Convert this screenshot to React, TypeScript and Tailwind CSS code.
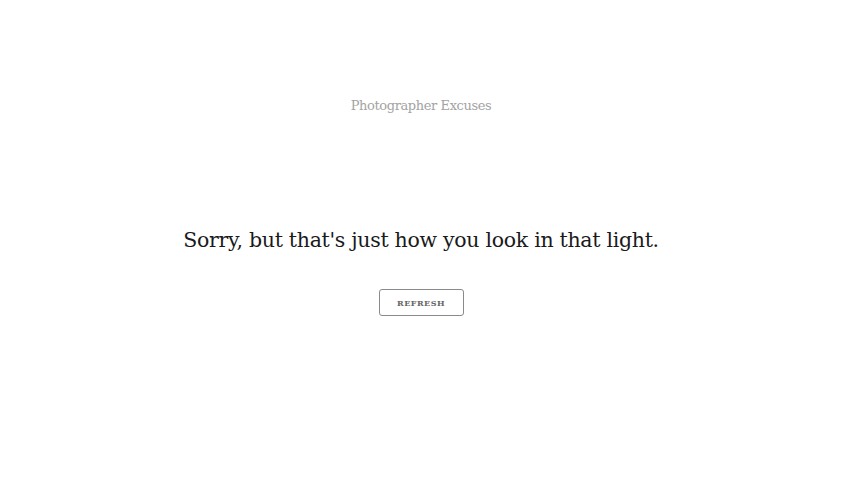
export default function App() {
  return (
    <div
      className="flex min-h-screen flex-col items-center bg-white pr-[8px]"
      style={{ fontFamily: '"DejaVu Serif", "Liberation Serif", serif' }}
    >
      <header className="pt-[97px]">
        <h1 className="text-[13px] leading-[18px] tracking-[-0.4px] text-[#a3a3a3]">
          Photographer Excuses
        </h1>
      </header>

      <main className="mt-[110px] flex flex-col items-center">
        <p className="text-[20.5px] leading-[30px] tracking-[-0.3px] text-[#1a1a1a]">
          Sorry, but that's just how you look in that light.
        </p>
        <button className="mt-[34px] flex h-[27px] w-[85px] items-center justify-center rounded-[3px] border border-[#8a8a8a] text-[8px] font-bold tracking-[0.5px] text-[#666]">
          REFRESH
        </button>
      </main>
    </div>
  );
}
